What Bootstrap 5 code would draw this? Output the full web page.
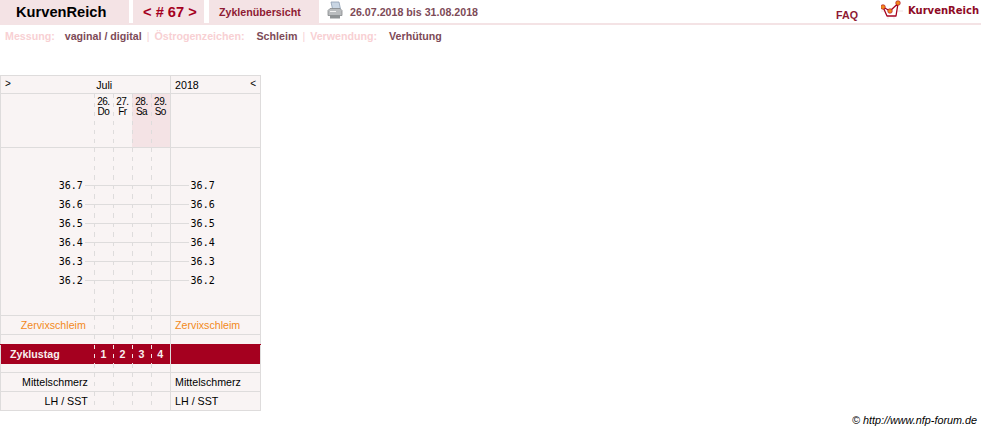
<!DOCTYPE html>
<html lang="de">
<head>
  <meta charset="UTF-8">
  <meta name="viewport" content="width=device-width, initial-scale=1.0">
  <title>KurvenReich</title>
  <link href="https://cdn.jsdelivr.net/npm/bootstrap@5.3.0/dist/css/bootstrap.min.css" rel="stylesheet">
  <style>
    body { font-family: "Liberation Sans", Arial, sans-serif; font-size: 10.67px; color: #000; background: #fff; height: 430px; overflow: hidden; }
    a { text-decoration: none; }
    .kopf { height: 25px; border-bottom: 2px solid #f4e3e5; }
    .reiter { background: #f4e3e5; height: 23px; font-weight: 700; }
    .reiter-marke { width: 129px; padding-left: 16px; font-size: 14.67px; color: #000; }
    .reiter-nav { width: 71px; margin-left: 4px; padding-left: 10px; font-size: 14.67px; color: #a5001f; }
    .reiter-titel { width: 110px; margin-left: 5px; padding-left: 10px; color: #8e1a33; }
    .drucker { margin-left: 8px; }
    .zeitraum { margin-left: 7px; font-weight: 700; color: #7d4a57; }
    .faq { font-weight: 700; color: #8e1a33; margin-right: 23px; margin-top: 7px; }
    .logo-text { font-family: "DejaVu Sans", sans-serif; font-weight: 700; font-size: 10px; color: #8e0a25; width: 73px; margin-left: 3px; margin-top: -3px; white-space: nowrap; }
    .filter { height: 21px; padding-left: 5px; font-weight: 700; color: #7d4a57; }
    .filter-label { color: #f8d0d3; }
    .filter-sep { color: #f8d0d3; font-weight: 400; margin: 0 5px; }
    .filter-wert { margin-left: 10px; }
    .filter-wert-weit { margin-left: 12px; }
    .kurve { margin-top: 29px; width: 261px; table-layout: fixed; border-collapse: collapse; background: #f9f4f4; border: 1px solid #dedcdc; }
    .kurve td { padding: 0; height: 19px; line-height: 1; white-space: nowrap; overflow: hidden; }
    .sp-label { width: 93px; }
    .sp-tag { width: 19px; }
    .sp-rest { width: 90px; }
    .kurve td.tag { --dash: #dedcdc; text-align: center; background: repeating-linear-gradient(to bottom, var(--dash) 0 4px, transparent 4px 9px) left top / 1px 100% no-repeat; }
    .kurve td.rechts { border-left: 1px solid #dedcdc; padding-left: 4.5px; }
    .kurve tr.linie > td { border-top: 1px solid #dedcdc; }
    .kurve .kopfzeile td { height: 18px; padding-top: 1px; }
    .monat { padding-left: 28px; }
    .pfeil { font-size: 10px; line-height: 1; margin-top: -1px; }
    .kurve td.datum { height: 54px; vertical-align: top; padding-top: 3px; font-size: 10px; line-height: 10px; letter-spacing: -.5px; }
    .kurve td.wochenende { background-color: #f4e3e5; }
    .kurve .leer { height: 28px; }
    .kurve .leer-unten { height: 26px; }
    .kurve .schmal { height: 10px; }
    .kurve .schmal-unten { height: 9px; }
    .temp { font-family: "DejaVu Sans Mono", monospace; font-size: 10px; padding-top: 2px; }
    .strich { background: #dedcdc; height: 1px; }
    .strich-links { width: 9px; margin-left: 2px; }
    .strich-rechts { width: 18px; margin-right: 2px; }
    .kurve td.rechts.temp-rechts { padding-left: 0; }
    .kurve td.tag.mitte { background: repeating-linear-gradient(to bottom, var(--dash) 0 4px, transparent 4px 9px) left top / 1px 100% no-repeat, linear-gradient(#dedcdc, #dedcdc) center / 100% 1px no-repeat; }
    .zervix { color: #f28a1c; }
    .kurve .zyklus td { background-color: #a5001f; color: #f8eeee; font-weight: 700; border-top: 1px solid #a5001f; }
    .kurve .zyklus td.tag { --dash: #f4e3e5; }
    .kurve td.zyklus-titel { padding-left: 9px; }
    .kurve td.abstand-rechts { padding-right: 6px; }
    .fuss { font-size: 10.8px; font-style: italic; padding-right: 4px; margin-top: 1px; }
  </style>
</head>
<body>
  <div class="kopf d-flex align-items-start">
    <div class="reiter reiter-marke d-flex align-items-center">KurvenReich</div>
    <div class="reiter reiter-nav d-flex align-items-center">&lt; # 67 &gt;</div>
    <div class="reiter reiter-titel d-flex align-items-center">Zyklenübersicht</div>
    <svg class="drucker" width="16" height="20" viewBox="0 0 16 20">
      <path d="M4 2h8l1.500 7h-8z" fill="#c9d6e4" stroke="#8fa0b2" stroke-width=".8"/>
      <path d="M1 10.500l2-2h10l2 2v5H1z" fill="#b9bcbe" stroke="#85898c" stroke-width=".8"/>
      <path d="M3 15h10v3.500H3z" fill="#8e9294"/>
      <path d="M3 11h6v1H3z" fill="#f2f2f2"/>
    </svg>
    <div class="zeitraum align-self-center">26.07.2018 bis 31.08.2018</div>
    <a class="faq ms-auto" href="#">FAQ</a>
    <svg width="24" height="20" viewBox="0 0 24 20">
      <path d="M0 11h22M6 18h2M12 18h2" stroke="#f0e2e2" stroke-width="1"/>
      <path d="M2 7l4 9h9l2-12.500-8 7.500z" fill="#fff" stroke="#a5001f" stroke-width="1.300" stroke-linejoin="round"/>
      <circle cx="2" cy="7" r="2.300" fill="#f28a1c" stroke="#a5001f" stroke-width=".6"/>
      <circle cx="9" cy="11" r="2.300" fill="#f28a1c" stroke="#a5001f" stroke-width=".6"/>
      <circle cx="17" cy="3" r="2.300" fill="#f28a1c" stroke="#a5001f" stroke-width=".6"/>
    </svg>
    <div class="logo-text align-self-center">KurvenReich</div>
  </div>

  <div class="filter d-flex align-items-center">
    <span class="filter-label">Messung:</span>
    <span class="filter-wert">vaginal / digital</span>
    <span class="filter-sep">|</span>
    <span class="filter-label">Östrogenzeichen:</span>
    <span class="filter-wert-weit">Schleim</span>
    <span class="filter-sep">|</span>
    <span class="filter-label">Verwendung:</span>
    <span class="filter-wert-weit">Verhütung</span>
  </div>

  <table class="kurve">
    <colgroup>
      <col class="sp-label"><col class="sp-tag"><col class="sp-tag"><col class="sp-tag"><col class="sp-tag"><col class="sp-rest">
    </colgroup>
    <tr class="kopfzeile">
      <td colspan="5">
        <div class="d-flex align-items-center">
          <span class="pfeil ms-1">&gt;</span>
          <span class="flex-grow-1 text-center monat">Juli</span>
        </div>
      </td>
      <td class="rechts">
        <div class="d-flex justify-content-between align-items-center pe-1">
          <span>2018</span><span class="pfeil">&lt;</span>
        </div>
      </td>
    </tr>
    <tr class="linie">
      <td class="datum"></td>
      <td class="tag datum">26.<br>Do</td>
      <td class="tag datum">27.<br>Fr</td>
      <td class="tag datum wochenende">28.<br>Sa</td>
      <td class="tag datum wochenende">29.<br>So</td>
      <td class="rechts datum"></td>
    </tr>
    <tr class="linie">
      <td class="leer"></td><td class="tag leer"></td><td class="tag leer"></td><td class="tag leer"></td><td class="tag leer"></td><td class="rechts leer"></td>
    </tr>
    <tr><td><div class="d-flex align-items-center justify-content-end"><span class="temp">36.7</span><span class="strich strich-links"></span></div></td><td class="tag mitte"></td><td class="tag mitte"></td><td class="tag mitte"></td><td class="tag mitte"></td><td class="rechts temp-rechts"><div class="d-flex align-items-center"><span class="strich strich-rechts"></span><span class="temp">36.7</span></div></td></tr>
    <tr><td><div class="d-flex align-items-center justify-content-end"><span class="temp">36.6</span><span class="strich strich-links"></span></div></td><td class="tag mitte"></td><td class="tag mitte"></td><td class="tag mitte"></td><td class="tag mitte"></td><td class="rechts temp-rechts"><div class="d-flex align-items-center"><span class="strich strich-rechts"></span><span class="temp">36.6</span></div></td></tr>
    <tr><td><div class="d-flex align-items-center justify-content-end"><span class="temp">36.5</span><span class="strich strich-links"></span></div></td><td class="tag mitte"></td><td class="tag mitte"></td><td class="tag mitte"></td><td class="tag mitte"></td><td class="rechts temp-rechts"><div class="d-flex align-items-center"><span class="strich strich-rechts"></span><span class="temp">36.5</span></div></td></tr>
    <tr><td><div class="d-flex align-items-center justify-content-end"><span class="temp">36.4</span><span class="strich strich-links"></span></div></td><td class="tag mitte"></td><td class="tag mitte"></td><td class="tag mitte"></td><td class="tag mitte"></td><td class="rechts temp-rechts"><div class="d-flex align-items-center"><span class="strich strich-rechts"></span><span class="temp">36.4</span></div></td></tr>
    <tr><td><div class="d-flex align-items-center justify-content-end"><span class="temp">36.3</span><span class="strich strich-links"></span></div></td><td class="tag mitte"></td><td class="tag mitte"></td><td class="tag mitte"></td><td class="tag mitte"></td><td class="rechts temp-rechts"><div class="d-flex align-items-center"><span class="strich strich-rechts"></span><span class="temp">36.3</span></div></td></tr>
    <tr><td><div class="d-flex align-items-center justify-content-end"><span class="temp">36.2</span><span class="strich strich-links"></span></div></td><td class="tag mitte"></td><td class="tag mitte"></td><td class="tag mitte"></td><td class="tag mitte"></td><td class="rechts temp-rechts"><div class="d-flex align-items-center"><span class="strich strich-rechts"></span><span class="temp">36.2</span></div></td></tr>
    <tr>
      <td class="leer-unten"></td><td class="tag leer-unten"></td><td class="tag leer-unten"></td><td class="tag leer-unten"></td><td class="tag leer-unten"></td><td class="rechts leer-unten"></td>
    </tr>
    <tr class="linie">
      <td class="text-end zervix pe-2">Zervixschleim</td><td class="tag"></td><td class="tag"></td><td class="tag"></td><td class="tag"></td><td class="rechts zervix">Zervixschleim</td>
    </tr>
    <tr class="linie">
      <td class="schmal"></td><td class="tag schmal"></td><td class="tag schmal"></td><td class="tag schmal"></td><td class="tag schmal"></td><td class="rechts schmal"></td>
    </tr>
    <tr class="zyklus">
      <td class="zyklus-titel">Zyklustag</td><td class="tag">1</td><td class="tag">2</td><td class="tag">3</td><td class="tag">4</td><td class="rechts"></td>
    </tr>
    <tr>
      <td class="schmal-unten"></td><td class="tag schmal-unten"></td><td class="tag schmal-unten"></td><td class="tag schmal-unten"></td><td class="tag schmal-unten"></td><td class="rechts schmal-unten"></td>
    </tr>
    <tr class="linie">
      <td class="text-end abstand-rechts">Mittelschmerz</td><td class="tag"></td><td class="tag"></td><td class="tag"></td><td class="tag"></td><td class="rechts">Mittelschmerz</td>
    </tr>
    <tr class="linie">
      <td class="text-end abstand-rechts">LH / SST</td><td class="tag"></td><td class="tag"></td><td class="tag"></td><td class="tag"></td><td class="rechts">LH / SST</td>
    </tr>
  </table>

  <div class="fuss text-end">© http://www.nfp-forum.de</div>

  <script src="https://cdn.jsdelivr.net/npm/bootstrap@5.3.0/dist/js/bootstrap.bundle.min.js"></script>
</body>
</html>
